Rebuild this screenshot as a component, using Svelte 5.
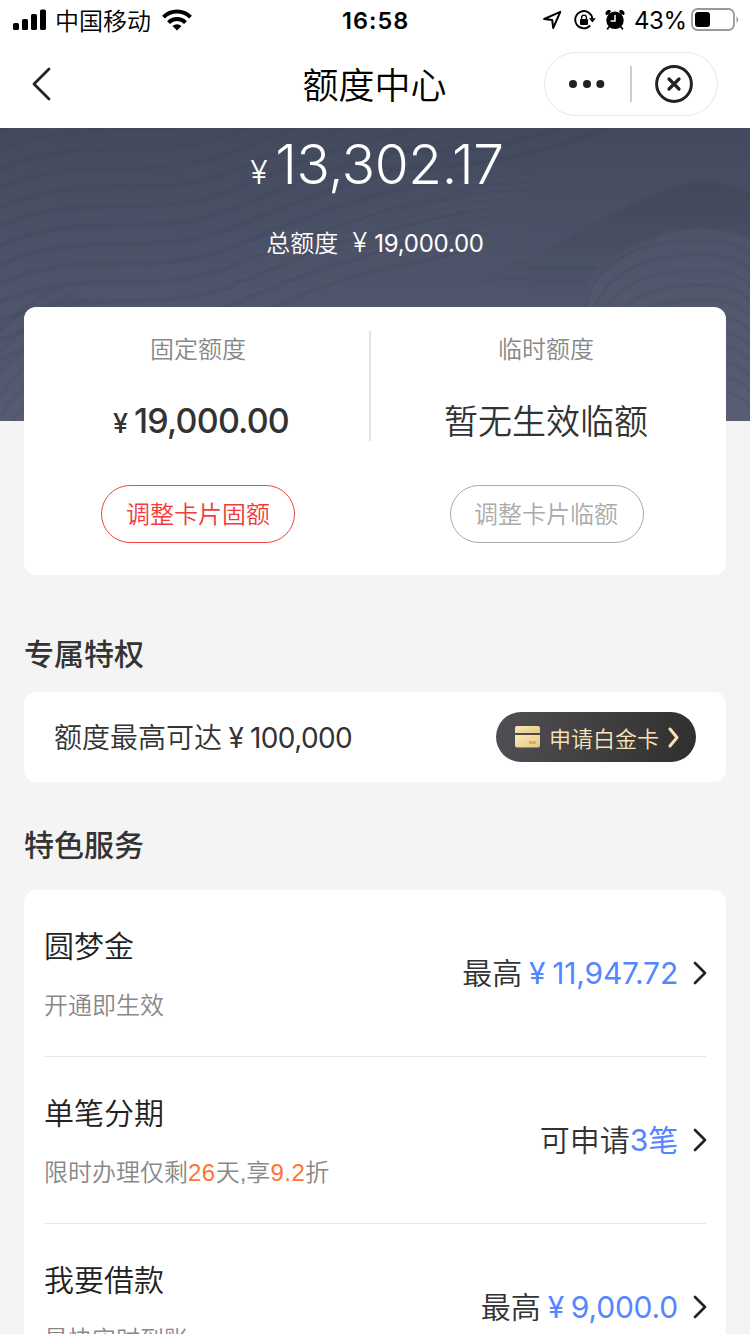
<script>
  const services = [
    { title: '圆梦金', note: [['开通即生效', false]], label: '最高', yen: true, value: '11,947.72' },
    {
      title: '单笔分期',
      note: [['限时办理仅剩', false], ['26', true], ['天,享', false], ['9.2', true], ['折', false]],
      label: '可申请', yen: false, value: '3笔'
    },
    { title: '我要借款', note: [['最快实时到账', false]], label: '最高', yen: true, value: '9,000.0' }
  ];

  // Contour lines of the hero background
  const left = Array.from({ length: 15 }, (_, i) => {
    const y = -70 + i * 19;
    return `M-10 ${y + 40} C80 ${y - 5} 150 ${y + 32} 230 ${y} S330 ${y - 45} 470 ${y - 75}`;
  });
  const fine = Array.from({ length: 16 }, (_, i) => {
    const y = 62 + i * 8;
    return `M${250 - i * 4} ${y + 55} C340 ${y + 50} 390 ${y - 8} 530 ${y - 12}`;
  });
  const right = Array.from({ length: 11 }, (_, i) => {
    const y = 112 + i * 15;
    return `M${584 + i * 6} ${y + 75} C${590 + i * 5} ${y + 15} 650 ${y} 700 ${y} S740 ${y + 14} 765 ${y + 26}`;
  });
  const corner = Array.from({ length: 8 }, (_, i) => `M-8 ${212 + i * 22} Q30 ${170 + i * 18} ${70 + i * 8} ${155 + i * 8}`);
</script>

<div class="screen">
  <header>
    <div class="status">
      <svg class="signal" width="34" height="22" viewBox="0 0 34 22">
        <rect x="0" y="14" width="6" height="7" rx="1.6" /><rect x="9" y="10" width="6" height="11" rx="1.6" />
        <rect x="18" y="5" width="6" height="16" rx="1.6" /><rect x="27" y="0.5" width="6" height="20.5" rx="1.6" />
      </svg>
      <span class="carrier">中国移动</span>
      <svg class="wifi" width="30" height="22" viewBox="0 0 30 22" fill="none" stroke="#000" stroke-width="4">
        <path d="M1.5 8.2A19 19 0 0 1 28.5 8.2" /><path d="M6.5 13.6A12 12 0 0 1 23.5 13.6" />
        <path d="M10.5 17.1A6.6 6.6 0 0 1 19.5 17.1L15 21.5Z" fill="#000" stroke="none" />
      </svg>
      <b class="time">16:58</b>
      <div class="tray">
        <svg width="19" height="20" viewBox="0 0 19 20" fill="none" stroke="#000" stroke-width="2" stroke-linejoin="round"><path d="M1.2 9L17.3 1.8L10.2 18L9.2 10Z" /></svg>
        <svg class="lock" width="22" height="20" viewBox="0 0 22 20">
          <path d="M16.2 15.5A8.6 8.6 0 1 1 18.4 9" fill="none" stroke="#000" stroke-width="1.9" />
          <path d="M15 8.2H21.8L18.4 12.5Z" /><rect x="6" y="9" width="8" height="6" rx="1" />
          <path d="M7.6 9.5V7.5a2.4 2.4 0 0 1 4.8 0V9.5" fill="none" stroke="#000" stroke-width="1.4" />
        </svg>
        <svg class="alarm" width="20" height="20" viewBox="0 0 20 20">
          <circle cx="10" cy="10.3" r="8.7" /><path d="M1.2 5.2A3.2 3.2 0 0 1 6 1L4.5 4ZM18.8 5.2A3.2 3.2 0 0 0 14 1L15.5 4Z" />
          <path d="M4.5 16.5L2.6 18.8M15.5 16.5L17.4 18.8" stroke="#000" stroke-width="1.8" stroke-linecap="round" />
          <path d="M10 5V10.9H5.6" fill="none" stroke="#fff" stroke-width="1.5" />
        </svg>
        <span class="percent">43%</span>
        <svg class="battery" width="48" height="24" viewBox="0 0 48 24">
          <rect x="1" y="1" width="42" height="21" rx="5.5" fill="none" stroke="#999" stroke-width="1.8" />
          <rect x="4" y="4" width="15" height="15" rx="3" /><path d="M45.5 8.2Q49 11.5 45.5 15Z" fill="#999" />
        </svg>
      </div>
    </div>
    <nav>
      <svg class="back" width="22" height="36" viewBox="0 0 22 36" fill="none" stroke="#222" stroke-width="2.8" stroke-linecap="round" stroke-linejoin="round"><path d="M18 3L3 18L18 33" /></svg>
      <h1>额度中心</h1>
      <div class="capsule">
        <svg width="36" height="8" viewBox="0 0 36 8" fill="#222"><circle cx="4" cy="4" r="4" /><circle cx="18" cy="4" r="4" /><circle cx="31.3" cy="4" r="4" /></svg>
        <i></i>
        <svg width="38" height="38" viewBox="0 0 38 38" fill="none" stroke="#222"><circle cx="19" cy="19" r="17.4" stroke-width="3" /><path d="M14 14L24 24M24 14L14 24" stroke-width="3.2" stroke-linecap="round" /></svg>
      </div>
    </nav>
  </header>

  <section class="hero">
    <svg class="waves" width="750" height="293" viewBox="0 0 750 293" fill="none">
      <defs>
        <linearGradient id="shade" x1="0" y1="0" x2="0" y2="1"><stop stop-color="#353a4b" stop-opacity=".5" /><stop offset=".8" stop-color="#353a4b" stop-opacity="0" /></linearGradient>
        <filter id="soft" x="0" y="0" width="750" height="293" filterUnits="userSpaceOnUse"><feGaussianBlur stdDeviation="1.3" /></filter>
      </defs>
      <g filter="url(#soft)">
        <path d="M480 150C580 115 630 62 700 54Q735 54 765 72V120Q690 75 620 135Q585 155 580 190C520 170 500 160 480 150Z" fill="url(#shade)" opacity=".6" />
        <path d="M583 190Q580 130 660 107Q710 90 765 118V293H600Z" fill="#62677d" opacity=".14" />
        {#each left as d}<path {d} stroke="#34394b" stroke-opacity=".2" stroke-width="2.4" />{/each}
        {#each fine as d}<path {d} stroke="#626980" stroke-opacity=".12" stroke-width="2" />{/each}
        {#each right as d}<path {d} stroke="#3a4053" stroke-opacity=".32" stroke-width="2" />{/each}
        {#each corner as d}<path {d} stroke="#3a4053" stroke-opacity=".24" stroke-width="2" />{/each}
        <path d="M375 40Q500 45 620 -5M390 22Q490 30 570 -5" stroke="#343a4c" stroke-opacity=".3" stroke-width="3" />
      </g>
    </svg>
    <div class="available"><span class="yen">¥</span><span class="num">13,302.17</span></div>
    <div class="total"><span>总额度</span><span class="yen">¥</span><span class="num">19,000.00</span></div>
  </section>

  <section class="limits">
    <div class="limit fixed">
      <p class="name">固定额度</p>
      <p class="amount"><span class="yen">¥</span><span class="num">19,000.00</span></p>
      <button>调整卡片固额</button>
    </div>
    <div class="rule"></div>
    <div class="limit temp">
      <p class="name">临时额度</p>
      <p class="amount">暂无生效临额</p>
      <button>调整卡片临额</button>
    </div>
  </section>

  <h2 class="h-privilege">专属特权</h2>
  <section class="privilege">
    <p><span>额度最高可达</span><span class="yen">¥</span><span class="num">100,000</span></p>
    <button>
      <svg width="26" height="22" viewBox="0 0 26 22">
        <defs><linearGradient id="gold" x2="1" y2="1"><stop stop-color="#fbe9bd" /><stop offset="1" stop-color="#e6c67e" /></linearGradient></defs>
        <path d="M2 0H23Q25 0 25 2V7H0V2Q0 0 2 0Z" fill="url(#gold)" /><path d="M0 9H25V19.5Q25 21.5 23 21.5H2Q0 21.5 0 19.5Z" fill="url(#gold)" />
        <rect x="14" y="15" width="7" height="3" fill="#b98e3f" opacity=".5" />
      </svg>
      <span>申请白金卡</span>
      <svg class="go" width="11" height="21" viewBox="0 0 11 21" fill="none" stroke="#fae4b6" stroke-width="3" stroke-linecap="round" stroke-linejoin="round"><path d="M2 2L9 10.5L2 19" /></svg>
    </button>
  </section>

  <h2 class="h-services">特色服务</h2>
  <section class="services">
    {#each services as s}
      <article>
        <div class="info">
          <h3>{s.title}</h3>
          <p>{#each s.note as [text, hot]}<span class:hot>{text}</span>{/each}</p>
        </div>
        <div class="offer">
          <div class="text"><span>{s.label}</span>{#if s.yen}<span class="yen">¥</span>{/if}<span class="value">{s.value}</span></div>
          <svg width="14" height="24" viewBox="0 0 14 24" fill="none" stroke="#222" stroke-width="2.7" stroke-linecap="round" stroke-linejoin="round"><path d="M2 2L12 12L2 22" /></svg>
        </div>
      </article>
    {/each}
  </section>
</div>

<style>
  :global(body) { background: #f4f4f4; }
  .screen { width: 750px; height: 1334px; overflow: hidden; background: #f4f4f4; color: #333; font-family: Inter, "Noto Sans CJK SC", sans-serif; font-weight: 350; white-space: nowrap; }
  p, h1, h2, h3 { margin: 0; font-weight: 350; }
  svg { display: block; flex: none; }
  button { font-family: inherit; background: none; padding: 0; }
  .yen { display: inline-block; text-align: center; }

  header { height: 128px; background: #fff; color: #000; }
  .status { display: grid; grid-template: 40px / 34px 104px 30px 1fr auto; height: 40px; padding: 0 11px 0 13px; align-items: center; }
  .signal { margin-top: -1px; }
  .carrier { padding: 4px 0 0 8px; font-size: 24px; line-height: 36px; }
  .wifi { margin: -1px 0 0 11px; }
  .time { padding: 1px 0 0 161px; font-size: 23.5px; font-weight: 600; letter-spacing: 1px; }
  .tray { display: flex; align-items: center; }
  .lock { margin-left: 12px; }
  .alarm { margin-left: 9px; }
  .percent { width: 52px; margin-left: 9px; padding-top: 1px; font-size: 24px; font-weight: 400; letter-spacing: -0.4px; }
  .battery { margin-left: 5px; }
  nav { display: grid; grid-template: 88px / 200px 1fr 206px; height: 88px; align-items: center; }
  .back { margin-left: 31px; }
  h1 { text-align: center; font-size: 36px; line-height: 84px; padding: 4px 0 0 5px; }
  .capsule { box-sizing: border-box; width: 174px; height: 64px; border: 1px solid #e8e8e8; border-radius: 32px; display: flex; align-items: center; padding-left: 24px; }
  .capsule i { width: 1.5px; height: 36px; background: #ccc; margin: 0 23px 0 25px; }

  .hero { position: relative; height: 179px; color: #fff; }
  .waves { position: absolute; top: 0; left: 0; background: linear-gradient(#444a5e, #565c72); }
  .available { position: relative; display: flex; justify-content: center; align-items: baseline; height: 72px; line-height: 73px; font-size: 55px; padding-left: 4px; }
  .available .num { letter-spacing: -0.4px; }
  .available .yen { width: 25px; text-align: left; font-size: 32px; }
  .total { position: relative; display: flex; justify-content: center; align-items: baseline; height: 36px; margin-top: 25px; line-height: 36px; font-size: 24px; }
  .total .yen { width: 36px; padding-left: 7px; box-sizing: border-box; font-size: 27px; }
  .total .num { font-weight: 400; letter-spacing: -0.25px; }

  .limits { position: relative; display: flex; box-sizing: border-box; height: 268px; margin: 0 24px; padding: 24px 3px 0; border-radius: 12px; background: #fff; }
  .limit { display: flex; flex-direction: column; align-items: center; }
  .fixed { width: 342px; }
  .temp { width: 352px; }
  .rule { width: 2px; height: 110px; background: #e5e5e5; }
  .name { color: #888; font-size: 24px; line-height: 36px; padding-top: 1px; }
  .amount { height: 50px; margin-top: 29px; line-height: 48px; font-size: 34px; }
  .temp p { margin-left: -2px; }
  .temp .amount { line-height: 50px; }
  .fixed .amount { font-weight: 500; display: flex; align-items: baseline; padding-left: 6px; }
  .fixed .num { letter-spacing: -0.8px; }
  .fixed .yen { width: 21px; text-align: left; font-size: 27px; }
  .limit button { box-sizing: border-box; width: 194px; height: 58px; margin-top: 38px; padding-top: 2px; border: 1px solid #aaa; border-radius: 29px; color: #aaa; font-size: 24px; line-height: 54px; font-weight: 350; }
  .limit.fixed button { border-color: #f24545; color: #f23b3b; }
  .limit.temp button { padding-right: 2px; }

  h2 { margin: 0 24px; font-size: 30px; line-height: 44px; font-weight: 500; }
  .h-privilege { padding-top: 57px; }
  .privilege { display: flex; justify-content: space-between; align-items: center; height: 90px; margin: 16px 24px 0; padding: 0 30px; border-radius: 12px; background: #fff; }
  .privilege p { font-size: 28px; line-height: 44px; padding-top: 2px; display: flex; align-items: baseline; }
  .privilege .num, .privilege .yen { font-weight: 400; letter-spacing: -0.6px; }
  .privilege .yen { width: 28px; }
  .privilege button { display: flex; align-items: center; width: 200px; height: 50px; padding-left: 19px; border: 0; border-radius: 25px; background: linear-gradient(100deg, #514f54, #302f2e); color: #fae4b6; font-size: 22px; font-weight: 350; }
  .privilege button span { width: 110px; margin: 0 9px 0 8px; }
  .h-services { padding-top: 41px; }
  .services { height: 460px; margin: 23px 24px 0; padding: 0 20px; border-radius: 12px; background: #fff; }
  article { display: flex; justify-content: space-between; height: 166px; border-bottom: 1px solid #e8e8e8; }
  h3 { padding-top: 34px; font-size: 30px; line-height: 44px; color: #222; }
  .info p { padding-top: 20px; font-size: 24px; line-height: 36px; color: #888; font-family: "Liberation Sans", "Noto Sans CJK SC", sans-serif; }
  .hot { color: #ff7336; letter-spacing: 0.5px; }
  .offer { display: flex; align-items: center; height: 166px; font-size: 30px; }
  .offer .text { display: flex; align-items: baseline; line-height: 44px; }
  .offer .yen { width: 30px; }
  .offer .yen, .value { color: #5585ff; font-weight: 400; letter-spacing: -0.2px; }
  .offer svg { margin: 0 -1px 0 15px; }
</style>
